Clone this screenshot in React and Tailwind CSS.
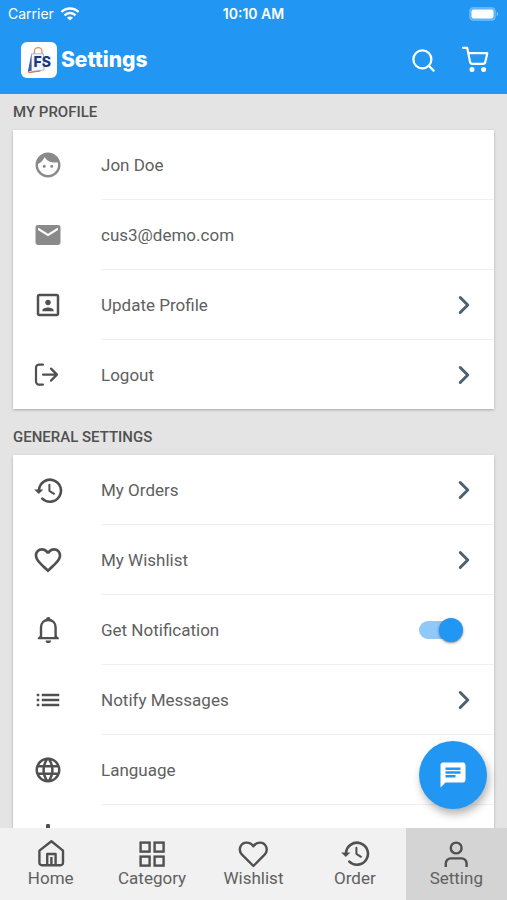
import { useState } from 'react'
import { ChevronRight, Search } from 'lucide-react'
import {
  MdFace, MdEmail, MdPortrait, MdFavoriteBorder,
  MdList, MdLanguage, MdChat,
} from 'react-icons/md'

function HistoryIcon() {
  return (
    <svg width="30" height="30" viewBox="0 0 30 30" fill="none" stroke="currentColor" strokeWidth="2.6">
      <path d="M6 14.800A11 11 0 1 1 9.300 23.600" strokeLinecap="round" />
      <path d="M1.200 14.400h9.200l-4.600 4.600z" fill="currentColor" stroke="none" />
      <path d="M16.400 9.800v6l4.600 3" strokeWidth="2" strokeLinecap="round" strokeLinejoin="round" />
    </svg>
  )
}

function LogoutIcon() {
  return (
    <svg width="30" height="30" viewBox="0 0 30 30" fill="none" stroke="currentColor" strokeWidth="2.2" strokeLinecap="round" strokeLinejoin="round">
      <path d="M10 4.600H6A3 3 0 0 0 3 7.600v14a3 3 0 0 0 3 3h4" />
      <path d="M10 14.600h13.800M18 8.600l6 6-6 6" />
    </svg>
  )
}

function BellIcon() {
  return (
    <svg width="30" height="30" viewBox="0 0 30 30" fill="none" stroke="currentColor" strokeWidth="2.4" strokeLinejoin="round">
      <path d="M8 22.200V12.600c0-4.600 3-7.600 7.300-7.600s7.300 3 7.300 7.600v9.600" />
      <path d="M4.800 24.200v-1.400l3.200-2.800v2h14.600v-2l3.200 2.800v1.400z" fill="currentColor" stroke="none" />
      <path d="M13 5.200V4.200a2.300 2.300 0 0 1 4.600 0v1z" fill="currentColor" stroke="none" />
      <path d="M12.600 25.400h5.400a2.700 2.700 0 0 1-5.400 0z" fill="currentColor" stroke="none" />
    </svg>
  )
}

function LampIcon() {
  return (
    <svg width="26" height="32" viewBox="0 0 26 32" fill="none" stroke="currentColor" strokeWidth="2.4" strokeLinejoin="round">
      <path d="M11 4V1.600a1.600 1.600 0 0 1 4 0V4l5 3H6z" fill="currentColor" stroke="none" />
      <path d="M7.600 6.400 3 22h20L18.400 6.400z" />
      <path d="M9 26.400h8" strokeLinecap="round" />
    </svg>
  )
}

function HomeIcon() {
  return (
    <svg width="30" height="30" viewBox="0 0 30 30" fill="none" stroke="currentColor" strokeWidth="2.4" strokeLinejoin="round">
      <path d="M3.400 12.600 15.400 3.200l11.600 9.400v12.200a2.400 2.400 0 0 1-2.400 2.400H5.800a2.400 2.400 0 0 1-2.400-2.400z" />
      <path d="M11.200 27V16h8.400v11M15.400 19v8" />
    </svg>
  )
}

function CategoryIcon() {
  return (
    <svg width="30" height="30" viewBox="0 0 30 30" fill="none" stroke="currentColor" strokeWidth="2.4">
      <rect x="3.600" y="4.600" width="9" height="9" />
      <rect x="17.600" y="4.600" width="9" height="9" />
      <rect x="3.600" y="18.600" width="9" height="9" />
      <rect x="17.600" y="18.600" width="9" height="9" />
    </svg>
  )
}

function HeartIcon() {
  return (
    <svg width="30" height="30" viewBox="0 0 30 30" fill="none" stroke="currentColor" strokeWidth="2.4" strokeLinejoin="round">
      <path d="M15.400 28 4 16.600C-.2 12.200 2.200 4.600 8.600 4.600c2.800 0 5.200 1.400 6.800 3.600 1.600-2.200 4-3.600 6.600-3.600 6.200 0 8.800 7.600 4.600 12z" />
    </svg>
  )
}

function PersonIcon() {
  return (
    <svg width="30" height="30" viewBox="0 0 30 30" fill="none" stroke="currentColor" strokeWidth="2.4">
      <circle cx="15.200" cy="10" r="5.400" />
      <path d="M4.800 29v-3.600a5 5 0 0 1 5-5h10.800a5 5 0 0 1 5 5V29" />
    </svg>
  )
}

function CartIcon() {
  return (
    <svg width="28" height="28" viewBox="0 0 28 28" fill="none" stroke="currentColor" strokeWidth="2.2" strokeLinecap="round" strokeLinejoin="round">
      <path d="M2 1.800h4.200l2.800 14a2.400 2.400 0 0 0 2.400 2H22a2.400 2.400 0 0 0 2.300-1.900l2-8.700H7.400" />
      <circle cx="11" cy="23.400" r="1.400" fill="currentColor" />
      <circle cx="22.600" cy="23.400" r="1.400" fill="currentColor" />
    </svg>
  )
}

function WifiIcon() {
  return (
    <svg width="20" height="14" viewBox="0 0 20 14" fill="none" stroke="currentColor" strokeWidth="2.400">
      <path d="M1.400 5a12.200 12.200 0 0 1 17.200 0" />
      <path d="M4.500 8.300a7.800 7.800 0 0 1 11 0" />
      <path d="M10 13.600 7 10.700a4.200 4.200 0 0 1 6 0z" fill="currentColor" stroke="none" />
    </svg>
  )
}

function BatteryIcon() {
  return (
    <svg width="30" height="14" viewBox="0 0 30 14">
      <rect x=".7" y=".7" width="25.600" height="12.600" rx="3.600" fill="#fff" fillOpacity=".25" stroke="#fff" strokeOpacity=".25" strokeWidth="1.200" />
      <rect x="2.500" y="2.500" width="22" height="9" rx="2" fill="#fff" />
      <path d="M27.800 5c1.800.6 1.800 3.400 0 4z" fill="#fff" fillOpacity=".5" />
    </svg>
  )
}

function Logo() {
  return (
    <span className="flex size-9 items-center justify-center rounded-md bg-white">
      <svg width="32" height="32" viewBox="0 0 32 32" fill="none">
        <path d="M11.400 10.500V7.500a3.800 3.800 0 0 1 7.600 0v3" stroke="#e8875a" strokeWidth="1.300" />
        <path d="M8.400 9.800h12l.6 16.200-12.600 1.600z" fill="#f3f5fa" stroke="#9aa9cc" strokeWidth=".8" />
        <path d="M8.400 9.400 4.800 28l3.600-1.600z" fill="#3d5aa0" />
        <path d="M5.400 28.600 17.500 27" stroke="#d5714e" strokeWidth="1.200" />
        <text x="10.500" y="23" fontFamily="Inter, sans-serif" fontSize="14" fontWeight="800" fill="#173a80">FS</text>
      </svg>
    </span>
  )
}

const PROFILE = [
  { icon: <MdFace size={30} />, label: 'Jon Doe', muted: true },
  { icon: <MdEmail size={30} />, label: 'cus3@demo.com', muted: true },
  { icon: <MdPortrait size={30} />, label: 'Update Profile', link: true },
  { icon: <LogoutIcon />, label: 'Logout', link: true },
]

const GENERAL = [
  { icon: <HistoryIcon />, label: 'My Orders', link: true },
  { icon: <MdFavoriteBorder size={32} className="shrink-0" />, label: 'My Wishlist', link: true },
  { icon: <BellIcon />, label: 'Get Notification', toggle: true },
  { icon: <MdList size={30} />, label: 'Notify Messages', link: true },
  { icon: <MdLanguage size={30} />, label: 'Language', link: true },
  { icon: <LampIcon />, name: 'Theme', link: true },
]

const TABS = [
  { icon: <HomeIcon />, label: 'Home' },
  { icon: <CategoryIcon />, label: 'Category' },
  { icon: <HeartIcon />, label: 'Wishlist' },
  { icon: <HistoryIcon />, label: 'Order' },
  { icon: <PersonIcon />, label: 'Setting' },
]

function Toggle({ id }) {
  const [on, setOn] = useState(true)
  return (
    <span className="relative mr-[5px] flex h-6 w-11 items-center">
      <input id={id} type="checkbox" checked={on} onChange={e => setOn(e.target.checked)}
             className="peer absolute inset-0 z-10 m-0 cursor-pointer opacity-0" />
      <span className="h-[18px] w-10 rounded-full bg-zinc-300 peer-checked:bg-[#90c8f8]" />
      <span className="absolute left-0 size-6 rounded-full bg-zinc-100 shadow-sm shadow-black/40 peer-checked:left-5 peer-checked:bg-[#2196f3]" />
    </span>
  )
}

function Row({ item, last }) {
  const iconColor = item.muted ? 'text-[#8a8a8a]' : 'text-[#505050]'
  const content = (
    <>
      <span className={`flex w-[88px] shrink-0 justify-start pl-5 ${iconColor}`}>
        <span className="flex w-[30px] justify-center">{item.icon}</span>
      </span>
      <span className={`flex h-full flex-1 items-center justify-between pr-[26px] ${last ? '' : 'border-b border-[#f0f0f0]'}`}>
        {item.toggle ? <label htmlFor="notify">{item.label}</label> : <span>{item.label}</span>}
        {item.toggle && <Toggle id="notify" />}
        {item.link && <ChevronRight size={30} strokeWidth={2.4} className="-mr-[11px] text-[#4d626e]" />}
      </span>
    </>
  )
  const cls = `flex w-full items-center text-left text-[17px] leading-6 text-[#606060] ${last ? 'h-[69px]' : 'h-[70px]'}`
  return (
    <li>
      {item.link
        ? <a href="#" aria-label={item.name} className={cls}>{content}</a>
        : <div className={cls}>{content}</div>}
    </li>
  )
}

function Section({ title, items }) {
  return (
    <section>
      <h2 className="px-[13px] py-2 text-[15px] leading-5 font-medium text-[#505050]">{title}</h2>
      <ul className="mx-[13px] bg-white shadow-sm shadow-black/20">
        {items.map((item, i) => <Row key={item.label ?? item.name} item={item} last={i === items.length - 1} />)}
      </ul>
    </section>
  )
}

export default function App() {
  return (
    <div className="flex h-screen flex-col bg-[#e4e4e4] font-['Roboto',sans-serif]">
      <header className="bg-[#2196f3] text-white">
        <div className="grid h-7 grid-cols-3 items-center px-2 font-['Inter',sans-serif] text-[14px] leading-5">
          <span className="flex items-center gap-1.5">Carrier <WifiIcon /></span>
          <span className="text-center font-semibold">10:10 AM</span>
          <span className="flex justify-end"><BatteryIcon /></span>
        </div>
        <div className="flex h-[66px] items-center pr-[18px] pb-0.5 pl-[21px]">
          <Logo />
          <h1 className="ml-1 flex-1 font-['Inter',sans-serif] text-[21px] leading-7 font-extrabold">Settings</h1>
          <div className="flex items-center gap-6">
            <button aria-label="Search"><Search size={27} strokeWidth={2} /></button>
            <button aria-label="Cart"><CartIcon /></button>
          </div>
        </div>
      </header>

      <div className="relative min-h-0 flex-1">
        <main className="flex h-full flex-col gap-2.5 overflow-y-auto [scrollbar-width:none]">
          <Section title="MY PROFILE" items={PROFILE} />
          <Section title="GENERAL SETTINGS" items={GENERAL} />
        </main>
        <button aria-label="Chat"
                className="absolute right-5 bottom-[19px] flex size-[68px] items-center justify-center rounded-full bg-[#2196f3] text-white shadow-[2px_5px_8px_rgba(0,0,0,0.3)]">
          <MdChat size={30} />
        </button>
      </div>

      <nav className="grid h-[72px] shrink-0 grid-cols-5 bg-[#f1f1f1] text-[17px] leading-5 text-[#606060]">
        {TABS.map(t => (
          <a key={t.label} href="#"
             className={`flex flex-col items-center pt-[10px] ${t.label === 'Setting' ? 'bg-[#d4d4d4]' : ''}`}>
            <span className="text-[#505050]">{t.icon}</span>
            <span>{t.label}</span>
          </a>
        ))}
      </nav>
    </div>
  )
}
